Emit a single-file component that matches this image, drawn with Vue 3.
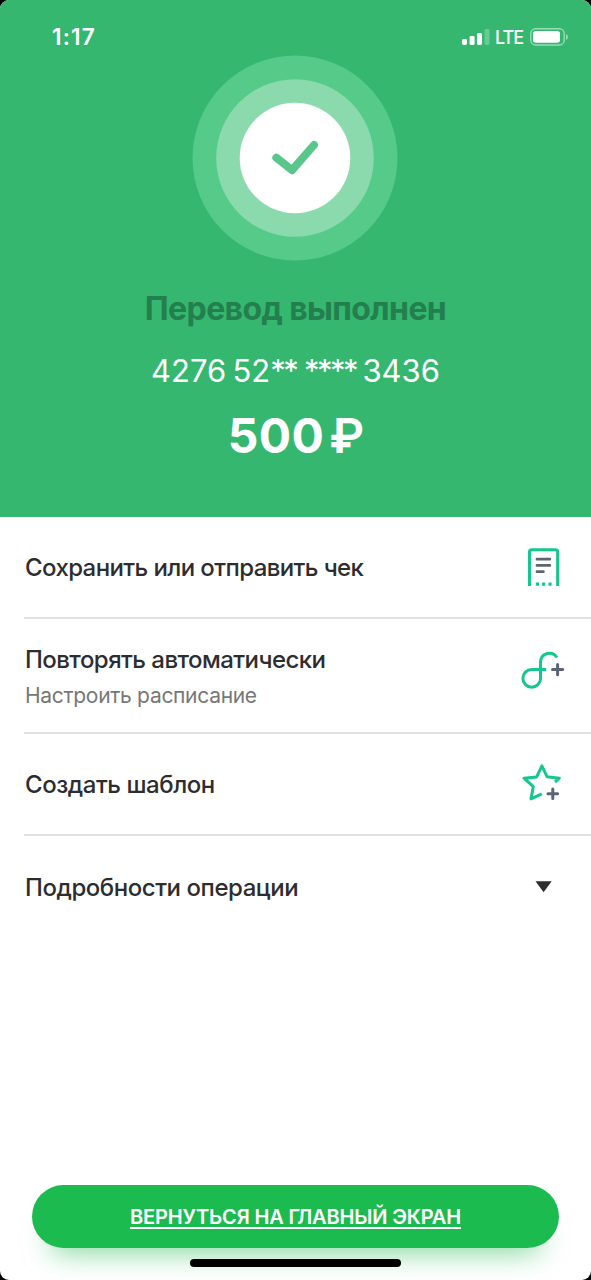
<script setup>
const actions = [
  { id: 'receipt', title: 'Сохранить или отправить чек' },
  { id: 'repeat', title: 'Повторять автоматически', note: 'Настроить расписание' },
  { id: 'template', title: 'Создать шаблон' },
  { id: 'details', title: 'Подробности операции' },
]
</script>

<template>
  <div class="device">
    <main class="screen">
      <section class="hero">
        <div class="status">
          <span class="time">1:17</span>
          <div class="indicators">
            <svg class="signal" width="28" height="18" viewBox="0 0 28 18" fill="#fff">
              <rect x="0" y="11" width="5" height="6" rx="1.4" />
              <rect x="7.6" y="8" width="5" height="9" rx="1.4" />
              <rect x="15" y="5" width="5" height="12" rx="1.4" />
              <rect x="22.5" y="1" width="5" height="16" rx="1.4" opacity=".25" />
            </svg>
            <span class="network">LTE</span>
            <svg class="battery" width="39" height="18" viewBox="0 0 39 18">
              <rect x=".8" y=".8" width="33.4" height="16.2" rx="4.8" fill="none" stroke="#fff" stroke-opacity=".5" stroke-width="1.4" />
              <rect x="3" y="3" width="27" height="11.8" rx="2.8" fill="#fff" />
              <path d="M36 6v6q2-.8 2-3t-2-3Z" fill="#fff" opacity=".5" />
            </svg>
          </div>
        </div>
        <svg class="success" width="206" height="206" viewBox="0 0 206 206">
          <circle cx="103" cy="103" r="102.5" fill="#55ca89" />
          <circle cx="103" cy="103" r="78.8" fill="#8adaae" />
          <circle cx="103" cy="103" r="55.3" fill="#fff" />
          <path d="M84.3 102.7 100.1 115.2 122 90" fill="none" stroke="#5ac68b" stroke-width="8" stroke-linecap="round" stroke-linejoin="round" />
        </svg>
        <h1 class="heading">Перевод выполнен</h1>
        <p class="card">4276 52<span class="mask">** ****</span> 3436</p>
        <p class="amount"><span class="value">500</span><span class="currency">₽</span></p>
      </section>

      <ul class="actions">
        <li v-for="item in actions" :key="item.id" class="action" :class="item.id">
          <div class="labels">
            <span class="title">{{ item.title }}</span>
            <span v-if="item.note" class="note">{{ item.note }}</span>
          </div>
          <svg v-if="item.id === 'receipt'" class="icon" width="48" height="48" viewBox="0 0 48 48" fill="none">
            <path d="M9.5 42V8.2q0-2.5 2.5-2.5h23.2q2.5 0 2.5 2.5V42" stroke="#15c78e" stroke-width="3.1" />
            <path d="M17 15.2h12.8M17 21.4h12.8M17 27.7h6.4" stroke="#5c6475" stroke-width="2.8" stroke-linecap="round" />
            <path d="M15.8 40.2h3.2M22 40.2h3.2M28.4 40.2h3.2" stroke="#15c78e" stroke-width="3.2" />
          </svg>
          <svg v-else-if="item.id === 'repeat'" class="icon" width="48" height="48" viewBox="0 0 48 48" fill="none">
            <path d="M37 11.6A8.9 8.9 0 0 0 20.5 15.5V32.4A8.8 8.8 0 1 1 11.7 23.6H26.2" stroke="#15c78e" stroke-width="3" stroke-linejoin="round" />
            <path d="M32.5 23.6h10.2M37.6 18.5v10.2" stroke="#5c6475" stroke-width="3" stroke-linecap="round" />
          </svg>
          <svg v-else-if="item.id === 'template'" class="icon" width="48" height="48" viewBox="0 0 48 48" fill="none">
            <path d="M35 21 39.4 17.2 27 15.7 21.9 4.9 16.6 15.9 4 17.2 13.3 25.7 11 37.9 21.8 32.9" stroke="#15c78e" stroke-width="3" stroke-linejoin="round" />
            <path d="M28 32.8h9.6M32.8 28v9.6" stroke="#5c6475" stroke-width="3" stroke-linecap="round" />
          </svg>
          <svg v-else class="icon" width="48" height="48" viewBox="0 0 48 48">
            <path d="M15.5 17.3h16.2L23.6 28.3Z" fill="#2d2d2f" />
          </svg>
        </li>
      </ul>

      <footer class="footer">
        <button class="home-button">ВЕРНУТЬСЯ НА ГЛАВНЫЙ ЭКРАН</button>
        <div class="home-indicator"></div>
      </footer>
    </main>
  </div>
</template>

<style>
body {
  background: #000;
}
</style>

<style scoped>
.device {
  width: 591px;
  height: 1280px;
  background: #000;
  font-family: Inter, "Liberation Sans", sans-serif;
}
.screen {
  display: flex;
  flex-direction: column;
  height: 1280px;
  overflow: hidden;
  border-radius: 9px;
  background: #fff;
}
.hero {
  display: flex;
  flex-direction: column;
  align-items: center;
  flex: none;
  height: 516.5px;
  background: #35b770;
  color: #fff;
}
.status {
  display: flex;
  justify-content: space-between;
  align-items: flex-start;
  width: 100%;
  height: 55px;
  box-sizing: border-box;
  padding: 22px 22px 0 52px;
}
.time {
  font-size: 22.5px;
  font-weight: 600;
  line-height: 30px;
  letter-spacing: 1.2px;
}
.indicators {
  display: flex;
  align-items: center;
  height: 30px;
}
.network {
  margin: 2px 7px 0 5px;
  font-size: 18px;
  font-weight: 500;
  line-height: 30px;
  letter-spacing: -1px;
}
.success {
  display: block;
  flex: none;
  margin-right: 0.5px;
}
.heading {
  margin: 28px 0 0;
  font-size: 32px;
  font-weight: 700;
  line-height: 40px;
  letter-spacing: -0.6px;
  color: #237f4d;
  white-space: nowrap;
}
.card {
  margin: 22px 0 0;
  font-size: 31px;
  line-height: 40px;
  word-spacing: -2.5px;
  white-space: nowrap;
}
.mask {
  letter-spacing: -2.5px;
  word-spacing: 1.5px;
}
.amount {
  display: flex;
  gap: 5px;
  margin: 15px 0 0;
  font-size: 48px;
  font-weight: 700;
  line-height: 60px;
}
.value {
  letter-spacing: 0.3px;
}
.currency {
  font-weight: 600;
  letter-spacing: -1px;
}
.actions {
  margin: 0;
  padding: 0;
  list-style: none;
}
.action {
  display: flex;
  align-items: center;
  justify-content: space-between;
  height: 102px;
  box-sizing: border-box;
  margin-left: 24px;
  padding: 2px 23px 0 1px;
  border-bottom: 2px solid #e2e2e2;
}
.action.repeat {
  height: 115px;
  padding-bottom: 12px;
}
.action.details {
  border-bottom: 0;
}
.labels {
  display: flex;
  flex-direction: column;
}
.repeat .labels {
  margin-top: 13px;
}
.title {
  font-size: 24px;
  font-weight: 500;
  line-height: 32px;
  letter-spacing: -0.55px;
  color: #2d2d2f;
  white-space: nowrap;
}
.receipt .title {
  letter-spacing: -0.6px;
}
.template .title,
.details .title {
  letter-spacing: -0.45px;
}
.note {
  margin-top: 6px;
  font-size: 21px;
  line-height: 28px;
  letter-spacing: -0.3px;
  color: #777;
}
.icon {
  flex: none;
}
.footer {
  display: flex;
  flex-direction: column;
  align-items: center;
  margin-top: auto;
  padding-bottom: 13px;
}
.home-button {
  width: 527px;
  height: 63px;
  padding: 0;
  border: 0;
  border-radius: 32px;
  background: #1cbb50;
  box-shadow: 0 22px 28px -18px rgba(28, 187, 80, 0.6);
  color: #fff;
  font: 600 20px/30px Inter, "Liberation Sans", sans-serif;
  letter-spacing: -0.15px;
  text-decoration: underline;
  text-decoration-thickness: 1.5px;
  text-underline-offset: 3px;
}
.home-indicator {
  z-index: 1;
  width: 211px;
  height: 8px;
  margin-top: 11px;
  border-radius: 4px;
  background: #000;
}
</style>
